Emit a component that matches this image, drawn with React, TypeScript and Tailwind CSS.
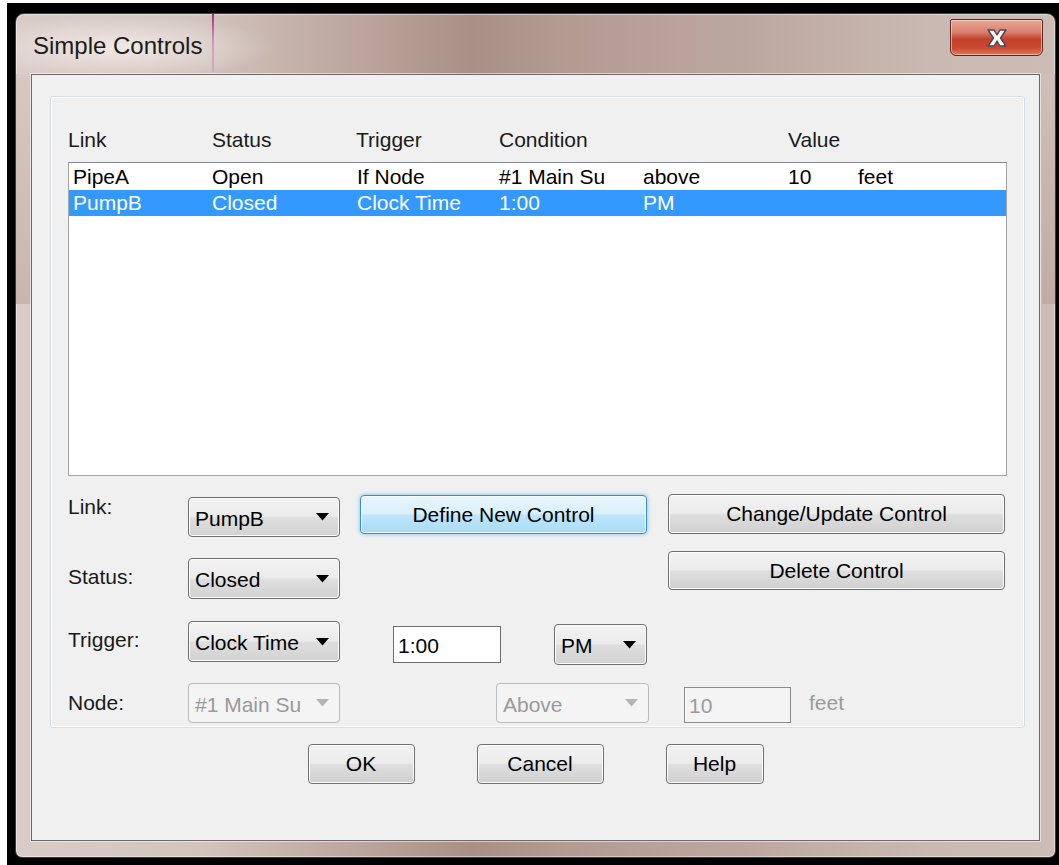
import type { ReactNode } from 'react';

const FONT = "font-['Liberation_Sans','Noto_Sans',sans-serif]";

type Row = { link: string; status: string; trigger: string; cond: string; op: string; value: string; unit: string };

const ROWS: Row[] = [
  { link: 'PipeA', status: 'Open', trigger: 'If Node', cond: '#1 Main Su', op: 'above', value: '10', unit: 'feet' },
  { link: 'PumpB', status: 'Closed', trigger: 'Clock Time', cond: '1:00', op: 'PM', value: '', unit: '' },
];

function Caret({ disabled }: { disabled?: boolean }) {
  return (
    <svg width="13" height="8" viewBox="0 0 13 8" aria-hidden>
      <polygon points="0,0 13,0 6.5,7.5" fill={disabled ? '#b4b4b4' : '#000'} />
    </svg>
  );
}

function Combo({ value, size, disabled }: { value: string; size: string; disabled?: boolean }) {
  return (
    <div
      className={
        'flex shrink-0 items-center justify-between rounded-[4px] border pl-[6px] pr-[10px] text-[21px] ' +
        size +
        (disabled
          ? ' border-[#b8bcbf] bg-[#f4f4f4] text-[#9a9a9a]'
          : ' border-[#707070] bg-[linear-gradient(#f3f3f3,#ebebeb_48%,#dedede_52%,#d2d2d2)] text-black shadow-[inset_0_0_0_1px_#fbfbfb]')
      }
    >
      <span className="pt-[3px]">{value}</span>
      <Caret disabled={disabled} />
    </div>
  );
}

function Button({ children, size, primary }: { children: ReactNode; size: string; primary?: boolean }) {
  return (
    <button
      type="button"
      className={
        'flex shrink-0 items-center justify-center rounded-[4px] border text-[21px] text-black ' +
        size +
        (primary
          ? ' border-[#3c8dc5] bg-[linear-gradient(#eaf6fd,#d9f0fc_48%,#bee6fd_52%,#a9dbf6)] shadow-[inset_0_0_0_1px_#f4fbff,0_0_4px_#6fc0f0]'
          : ' border-[#707070] bg-[linear-gradient(#f3f3f3,#ebebeb_48%,#dedede_52%,#d0d0d0)] shadow-[inset_0_0_0_1px_#fcfcfc]')
      }
    >
      {children}
    </button>
  );
}

function CloseButton() {
  return (
    <div className="absolute right-[12px] top-[5px] flex h-[37px] w-[93px] items-center justify-center rounded-b-[6px] rounded-t-[2px] border border-[#5a2a22] bg-[linear-gradient(#e9a898,#d9806c_35%,#c3402a_55%,#cc4a30_80%,#e07a5c)] shadow-[inset_0_0_0_1px_rgba(255,220,210,0.6)]">
      <svg width="28" height="22" viewBox="0 0 28 22" aria-hidden>
        <path
          d="M5 3 L11 3 L14 8 L17 3 L23 3 L17.5 11 L23 19 L17 19 L14 14 L11 19 L5 19 L10.5 11 Z"
          fill="#fbfbfb"
          stroke="#4a4a52"
          strokeWidth="1.4"
          strokeLinejoin="round"
        />
      </svg>
    </div>
  );
}

export default function App() {
  return (
    <div className={'h-[865px] w-[1059px] overflow-hidden bg-white pl-[7px] pt-[3px] ' + FONT}>
      <div className="h-[862px] w-[1052px] bg-black pl-[8px] pt-[10px]">
        {/* window frame */}
        <div className="relative flex h-[845px] w-[1041px] flex-col rounded-b-[7px] rounded-t-[9px] border border-[#3e3a38] bg-[linear-gradient(90deg,#d9ccc7_0%,#d2c3bd_18%,#b8a198_35%,#a98f86_44%,#b29a91_52%,#bca79f_70%,#c9b9b2_88%,#cbbcb6_100%)] px-[15px] pb-[16px] shadow-[inset_0_0_0_1px_rgba(255,255,255,0.45)]">
          <div className="pointer-events-none absolute left-0 top-[60px] h-[230px] w-[16px] bg-[linear-gradient(#d6c8c2,#c8b6ae)]" />
          <div className="pointer-events-none absolute right-0 top-[60px] h-[230px] w-[13px] bg-[linear-gradient(#cdbfb9,#c0aca4)]" />
          <div className="pointer-events-none absolute left-[196px] top-0 h-[58px] w-[2px] bg-[linear-gradient(#b0308c,rgba(176,48,140,0.15))]" />
          <div className="pointer-events-none absolute left-[0px] top-0 h-[60px] w-[260px] bg-[radial-gradient(ellipse_at_40%_55%,rgba(245,238,235,0.85),rgba(245,238,235,0)_70%)]" />

          {/* title bar */}
          <div className="relative flex h-[60px] shrink-0 items-center pl-[2px] pt-[4px]">
            <span className="text-[24px] text-[#1b1b1b]">Simple Controls</span>
          </div>
          <CloseButton />

          {/* client area */}
          <div className="relative flex flex-1 flex-col border border-[#6e6967] bg-[#f0f0f0] shadow-[0_0_0_1px_rgba(255,255,255,0.55)]">
            <div className="ml-[18px] mt-[21px] h-[632px] w-[975px] rounded-[3px] border border-[#d5dfe5] shadow-[inset_0_0_0_1px_#ffffff] px-[17px]">
              {/* column headings */}
              <div className="mt-[29px] flex h-[28px] items-center text-[21px] text-[#1a1a1a]">
                <span className="w-[144px]">Link</span>
                <span className="w-[144px]">Status</span>
                <span className="w-[143px]">Trigger</span>
                <span className="w-[289px]">Condition</span>
                <span>Value</span>
              </div>

              {/* control list */}
              <div className="mt-[8px] h-[314px] w-[939px] border border-[#a3a3a3] border-t-[#828790] bg-white pt-[1px]">
                {ROWS.map((r, i) => (
                  <div
                    key={r.link}
                    className={
                      'flex h-[26px] items-center pl-[4px] text-[21px] ' +
                      (i === 1 ? 'bg-[#3399ff] text-white' : 'text-black')
                    }
                  >
                    <span className="w-[139px]">{r.link}</span>
                    <span className="w-[145px]">{r.status}</span>
                    <span className="w-[142px]">{r.trigger}</span>
                    <span className="w-[144px]">{r.cond}</span>
                    <span className="w-[145px]">{r.op}</span>
                    <span className="w-[70px]">{r.value}</span>
                    <span>{r.unit}</span>
                  </div>
                ))}
              </div>

              {/* editor rows */}
              <div className="mt-[18px] flex h-[56px] items-start text-[21px]">
                <span className="w-[120px] leading-[26px] text-[#1a1a1a]">Link:</span>
                <div className="mt-[3px]">
                  <Combo value="PumpB" size="h-[40px] w-[152px]" />
                </div>
                <div className="ml-[20px] mt-[1px]">
                  <Button primary size="h-[39px] w-[287px]">Define New Control</Button>
                </div>
                <div className="ml-[21px]">
                  <Button size="h-[40px] w-[337px]">Change/Update Control</Button>
                </div>
              </div>

              <div className="flex h-[71px] items-start text-[21px]">
                <span className="mt-[13px] w-[120px] leading-[28px] text-[#1a1a1a]">Status:</span>
                <div className="mt-[8px]">
                  <Combo value="Closed" size="h-[41px] w-[152px]" />
                </div>
                <div className="ml-[328px] mt-[1px]">
                  <Button size="h-[39px] w-[337px]">Delete Control</Button>
                </div>
              </div>

              <div className="flex h-[62px] items-start text-[21px]">
                <span className="mt-[5px] w-[120px] leading-[28px] text-[#1a1a1a]">Trigger:</span>
                <Combo value="Clock Time" size="h-[41px] w-[152px]" />
                <div className="ml-[53px] mt-[5px] flex h-[37px] w-[108px] items-center border border-[#6f6f6f] bg-white pl-[4px] pt-[2px]">
                  1:00
                </div>
                <div className="ml-[53px] mt-[3px]">
                  <Combo value="PM" size="h-[41px] w-[93px]" />
                </div>
              </div>

              <div className="flex h-[44px] items-start text-[21px]">
                <span className="mt-[6px] w-[120px] leading-[28px] text-[#1a1a1a]">Node:</span>
                <Combo disabled value="#1 Main Su" size="h-[40px] w-[152px]" />
                <div className="ml-[156px]">
                  <Combo disabled value="Above" size="h-[40px] w-[153px]" />
                </div>
                <div className="ml-[35px] mt-[4px] flex h-[36px] w-[107px] items-center border border-[#8c8c8c] bg-[#f4f4f4] pl-[4px] pt-[2px] text-[#9a9a9a]">
                  10
                </div>
                <span className="ml-[18px] mt-[6px] leading-[28px] text-[#9a9a9a]">feet</span>
              </div>
            </div>

            {/* dialog buttons */}
            <div className="mt-[16px] flex justify-center gap-[62px]">
              <Button size="h-[40px] w-[107px]">OK</Button>
              <Button size="h-[40px] w-[127px]">Cancel</Button>
              <Button size="h-[40px] w-[98px]">Help</Button>
            </div>
          </div>
        </div>
      </div>
    </div>
  );
}
